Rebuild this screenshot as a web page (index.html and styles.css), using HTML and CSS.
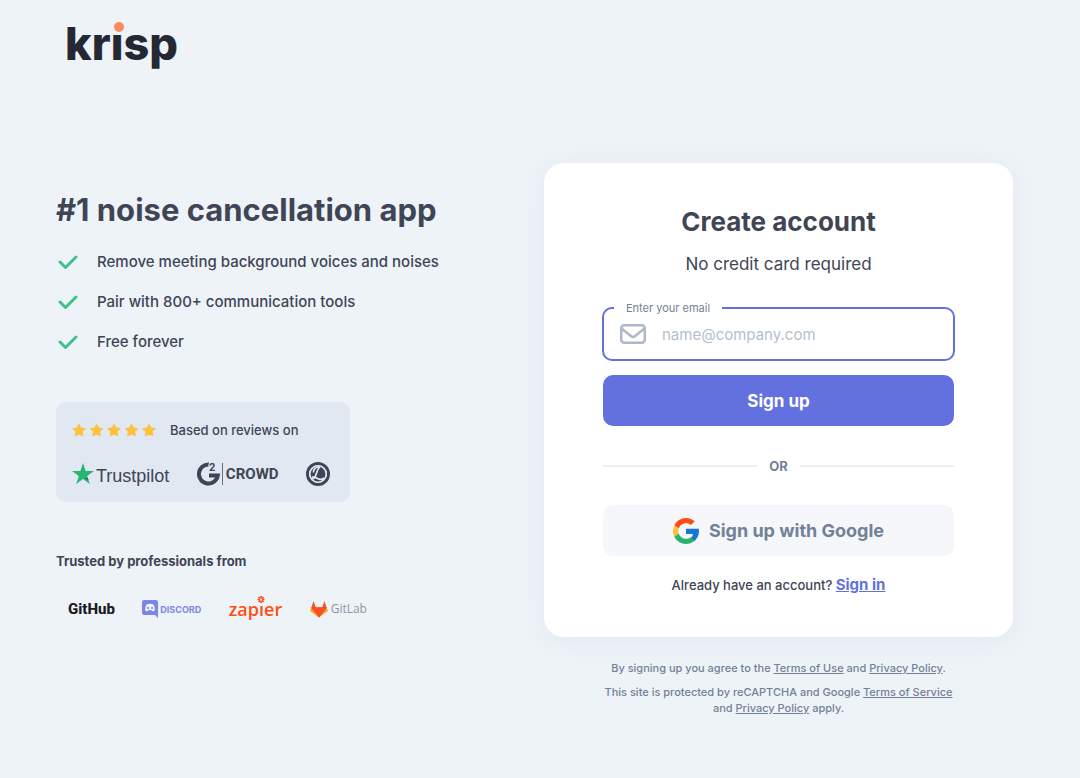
FILE: index.html
```html
<!DOCTYPE html>
<html lang="en">
<head>
<meta charset="utf-8">
<meta name="viewport" content="width=device-width, initial-scale=1">
<title>Krisp – Create account</title>
<link rel="stylesheet" href="styles.css">
</head>
<body>
<header class="header">
  <svg class="logo" viewBox="0 0 120 56" role="img" aria-label="krisp">
    <text class="logo-text" x="-1" y="43">krisp</text>
    <circle class="logo-cover" cx="52" cy="9" r="7"/>
    <circle class="logo-dot" cx="53" cy="10" r="5"/>
  </svg>
</header>
<main class="main">
  <section class="intro">
    <h1 class="headline">#1 noise cancellation app</h1>
    <ul class="benefits">
      <li class="benefit"><svg class="check" viewBox="0 0 20 16"><path d="M2 9l5.500 5.500L18 4"/></svg>Remove meeting background voices and noises</li>
      <li class="benefit"><svg class="check" viewBox="0 0 20 16"><path d="M2 9l5.500 5.500L18 4"/></svg>Pair with 800+ communication tools</li>
      <li class="benefit"><svg class="check" viewBox="0 0 20 16"><path d="M2 9l5.500 5.500L18 4"/></svg>Free forever</li>
    </ul>
    <div class="reviews">
      <div class="rating">
        <svg class="stars" viewBox="0 0 84 14" role="img" aria-label="5 stars">
          <defs><path id="star" stroke="#fdc13e" stroke-linejoin="round" d="M7 1.200l1.900 3.700 4.300.7-3.100 3.100.7 4L7 11.200l-3.800 1.500.7-4L.8 5.600l4.300-.7z"/></defs>
          <use href="#star"/><use href="#star" x="17.5"/><use href="#star" x="35"/><use href="#star" x="52.500"/><use href="#star" x="70"/>
        </svg>
        <span>Based on reviews on</span>
      </div>
      <div class="sources">
        <div class="trustpilot">
          <svg class="tp-star" viewBox="0 0 22 22"><path fill="#26b671" d="M11 0l2.600 8H22l-6.800 5 2.600 8-6.800-5-6.800 5 2.600-8L0 8h8.400z"/><path fill="#176b4a" d="M15.800 14.800l.6 1.900-3.900-1.200z"/></svg>
          <span>Trustpilot</span>
        </div>
        <div class="crowd">
          <svg class="g2" viewBox="0 0 27 28"><path fill="none" stroke="#404556" stroke-width="4" d="M12 4.500A9.500 9.500 0 1 0 20.800 15.500H12"/><text class="g2-two" x="12" y="11">2</text><path stroke="#6a7080" d="M25.500 3v22"/></svg>
          <span>CROWD</span>
        </div>
        <svg class="badge" viewBox="0 0 24 24"><circle cx="12" cy="12" r="10.500" fill="none" stroke="#404556" stroke-width="3"/><circle cx="12" cy="12" r="8.200" fill="#404556" stroke="#e1e8f1" stroke-width="1.600"/><path fill="none" stroke="#e1e8f1" stroke-width="1.700" d="M7.500 10.500C7 7.500 9.500 5 13 5M14 4.500C10.500 8 10.500 13 8.500 16c-1 1-2.500.5-2-.7.6-1.200 3 0 4.500 1 2.500 1.500 5 1.500 7-.5"/></svg>
      </div>
    </div>
    <h2 class="trusted">Trusted by professionals from</h2>
    <div class="brands">
      <span class="github">GitHub</span>
      <span class="discord"><svg class="discord-icon" viewBox="0 0 16 18"><path fill="#7a87e5" d="M2 0h12q2 0 2 2v16l-3-3H2q-2 0-2-2V2q0-2 2-2z"/><path fill="#eef3f8" d="M4.500 4.500Q8 3 11.500 4.500 13 7 13 10q-1 1.500-3 1.300L9.300 10H6.700L6 11.300Q4 11.500 3 10q0-3 1.500-5.500z"/><g fill="#7a87e5"><circle cx="6" cy="8" r="1.100"/><circle cx="10" cy="8" r="1.100"/></g></svg>DISCORD</span>
      <span class="zapier">zapier<svg class="spark" viewBox="0 0 8 10"><path d="M4 0v2.500M4 4.500V7M.5 3.500H3M5 3.500h2.500M1.500 1l1.500 1.500M5 4.500L6.500 6M6.500 1L5 2.500M3 4.500L1.500 6"/></svg></span>
      <span class="gitlab"><svg class="fox" viewBox="0 0 18 17"><path fill="#fca326" d="M1.500 6L0 10l9 6.500L18 10l-1.500-4z"/><path fill="#fc6d26" d="M1.500 6.500L9 16.500l7.500-10z"/><path fill="#f4502a" d="M3.500 0L1.300 7l7.700 9.500L16.700 7 14.500 0l-2.300 6.500H5.800z"/></svg>GitLab</span>
    </div>
  </section>
  <section class="signup">
    <form class="card">
      <h2 class="title">Create account</h2>
      <p class="subtitle">No credit card required</p>
      <fieldset class="field">
        <legend class="legend"><label for="email">Enter your email</label></legend>
        <svg class="mail" viewBox="0 0 26 20"><rect x="1.250" y="1.250" width="23.500" height="17.500" rx="3"/><path d="M1.500 4.500l9.700 7.700q1.800 1.300 3.600 0l9.700-7.700"/></svg>
        <input class="email" id="email" type="email" placeholder="name@company.com">
      </fieldset>
      <button class="btn primary" type="submit">Sign up</button>
      <div class="or">OR</div>
      <button class="btn google" type="button">
        <svg class="g-icon" viewBox="0 0 48 48"><path fill="#ff4b16" d="M24 9.500c3.500 0 6.700 1.200 9.200 3.600l6.900-6.900C35.900 2.400 30.500 0 24 0 14.600 0 6.500 5.400 2.600 13.200l8 6.200C12.400 13.700 17.700 9.500 24 9.500z"/><path fill="#1976d9" d="M47.500 20H24v9.500h12.900c-.6 3-2.300 5.500-4.800 7.200l7.700 6C44.400 38.400 48 32 48 24.600c0-1.600-.2-3.100-.5-4.600z"/><path fill="#fdc13e" d="M10.500 28.600a14.500 14.500 0 0 1 0-9.200l-8-6.200a24 24 0 0 0 0 21.600z"/><path fill="#27b36b" d="M24 48c6.500 0 11.900-2.100 15.900-5.800l-7.700-6c-2.200 1.500-4.900 2.300-8.200 2.300-6.300 0-11.600-4.200-13.500-9.900l-8 6.200C6.500 42.600 14.600 48 24 48z"/></svg>
        Sign up with Google
      </button>
      <p class="signin">Already have an account? <a class="signin-link" href="#">Sign in</a></p>
    </form>
    <div class="legal">
      <p class="legal-line">By signing up you agree to the <a href="#">Terms of Use</a> and <a href="#">Privacy Policy</a>.</p>
      <p class="legal-line">This site is protected by reCAPTCHA and Google <a href="#">Terms of Service</a> and <a href="#">Privacy Policy</a> apply.</p>
    </div>
  </section>
</main>
</body>
</html>
```

FILE: styles.css
```css
* { box-sizing: border-box; }
body { margin: 0; background: #eef3f8; color: #404556; font-family: Inter, "Liberation Sans", sans-serif; }
h1, h2, p, ul { margin: 0; padding: 0; }
svg { display: block; flex: none; }

.header { padding: 17px 67px 0 66px; }
.logo { width: 120px; height: 56px; overflow: visible; }
.logo-text { font: 800 45px Inter, sans-serif; fill: #242833; }
.logo-cover { fill: #eef3f8; }
.logo-dot { fill: #ff8860; }

.main { display: grid; grid-template-columns: 440fr 469fr; gap: 48px; padding: 90px 67px 40px 56px; }
.intro { padding-top: 27px; min-width: 0; }
.headline { font-size: 31px; line-height: 40px; font-weight: 700; white-space: nowrap; }
.benefits { list-style: none; margin-top: 11px; }
.benefit { display: flex; align-items: center; gap: 19px; height: 40px; padding-left: 2px; font-size: 15px; font-weight: 500; white-space: nowrap; }
.check { width: 20px; height: 16px; }
.check path { fill: none; stroke: #3dc38a; stroke-width: 3; stroke-linecap: round; stroke-linejoin: round; }

.reviews { width: 294px; margin-top: 41px; padding: 18px 16px 14px; border-radius: 10px; background: #e1e8f1; }
.rating { display: flex; align-items: center; gap: 14px; font-size: 13px; line-height: 20px; font-weight: 500; }
.stars { width: 84px; height: 14px; fill: #fdc13e; }
.sources { display: flex; align-items: center; justify-content: space-between; height: 28px; margin-top: 20px; padding-right: 4px; }
.trustpilot { display: flex; align-items: center; gap: 2px; font: 18px/28px "Liberation Sans", sans-serif; }
.trustpilot span { padding-top: 4px; }
.tp-star { width: 22px; height: 22px; }
.crowd { display: flex; align-items: center; gap: 2px; font: 700 15px/28px Roboto, sans-serif; }
.g2 { width: 27px; height: 28px; }
.g2-two { font: 700 11px Roboto, sans-serif; fill: #404556; stroke: #e1e8f1; stroke-width: 2px; paint-order: stroke; }
.badge { width: 24px; height: 24px; }

.trusted { margin-top: 49px; font-size: 13px; line-height: 20px; font-weight: 700; }
.brands { display: flex; align-items: center; justify-content: space-between; width: 311px; height: 28px; margin-top: 24px; padding-left: 12px; }
.github { color: #171b24; font: 800 15px/28px Roboto, sans-serif; }
.discord { display: flex; align-items: center; gap: 2px; color: #7a87e5; font-size: 9px; font-weight: 700; }
.discord-icon { width: 16px; height: 18px; }
.zapier { position: relative; color: #ff4f10; font: 600 18px/28px "Open Sans", sans-serif; }
.spark { position: absolute; top: 1px; left: 28px; width: 8px; height: 10px; background: #eef3f8; }
.spark path { fill: none; stroke: #ff4f10; stroke-width: 1.7; }
.gitlab { display: flex; align-items: center; gap: 3px; color: #8f96a3; font: 12px/28px "Open Sans", sans-serif; }
.fox { width: 18px; height: 17px; }

.signup { min-width: 0; }
.card { padding: 39px 59px 40px; border-radius: 20px; background: #fff; box-shadow: 0 4px 24px rgba(64, 100, 130, 0.07); text-align: center; }
.title { font-size: 26px; line-height: 40px; font-weight: 700; }
.subtitle { margin-top: 10px; font-size: 17px; line-height: 24px; }
.field { display: flex; align-items: center; gap: 16px; min-width: 0; margin: 23px -1px 14px; padding: 0 16px 8px; border: 2px solid #6371de; border-radius: 10px; }
.legend { margin: 0 auto 0 -6px; padding: 0 12px; color: #738196; font-size: 11px; line-height: 18px; }
.mail { width: 26px; height: 20px; fill: none; stroke: #adb9c8; stroke-width: 2.5; stroke-linejoin: round; }
.email { flex: 1; min-width: 0; height: 34px; padding: 0; border: 0; outline: 0; background: transparent; color: #404556; font: 15px Inter, sans-serif; }
.email::placeholder { color: #b4bfcd; opacity: 1; }
.btn { display: flex; align-items: center; justify-content: center; gap: 10px; width: 100%; height: 51px; padding: 0; border: 0; border-radius: 10px; font: 700 17px Inter, sans-serif; cursor: pointer; }
.primary { background: #6371de; color: #fff; }
.google { background: #f5f7fb; color: #738196; font-size: 18px; }
.g-icon { width: 26px; height: 26px; }
.or { display: flex; align-items: center; gap: 12px; height: 79px; color: #738196; font-size: 13px; font-weight: 700; }
.or::before, .or::after { content: ""; flex: 1; height: 2px; background: #eaf0f5; }
.signin { margin-top: 17px; font-size: 13px; line-height: 24px; font-weight: 500; white-space: nowrap; }
.signin-link { color: #6371de; font-size: 15px; font-weight: 700; }
.legal { padding: 23px 56px 0; color: #738196; font-size: 11px; line-height: 16px; font-weight: 500; text-align: center; }
.legal-line + .legal-line { margin-top: 8px; }
.legal a { color: inherit; }
```
